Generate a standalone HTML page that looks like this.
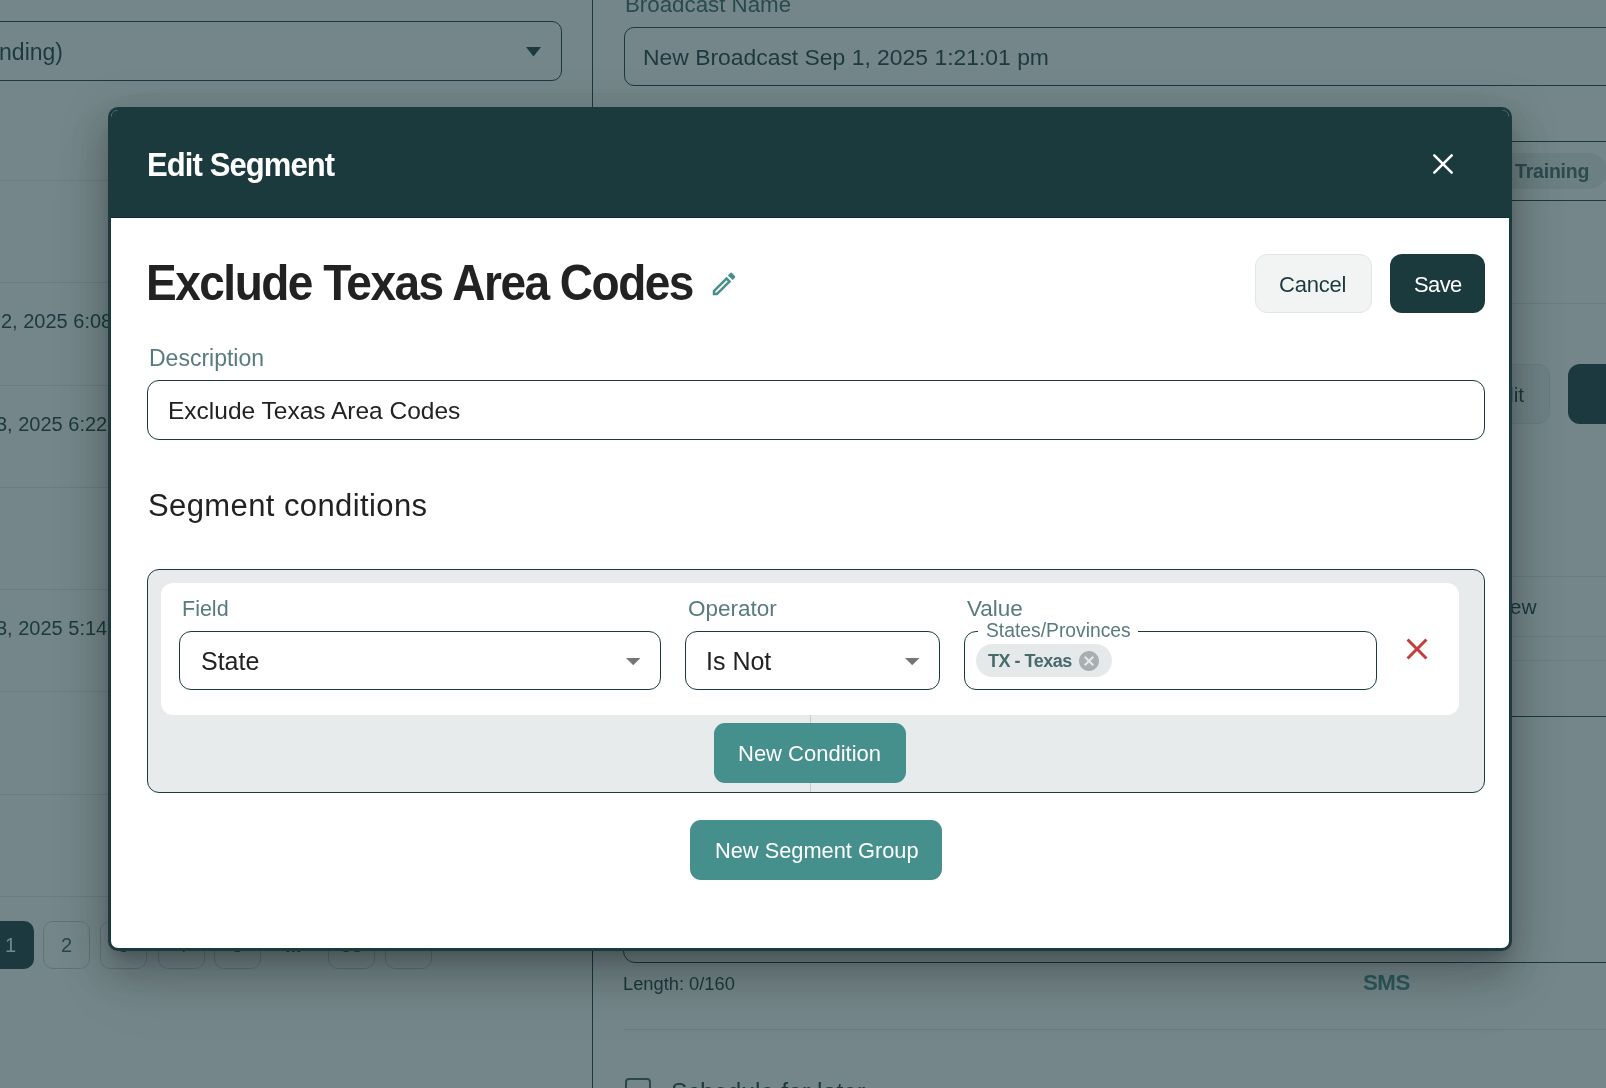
<!DOCTYPE html>
<html><head><meta charset="utf-8"><style>
html,body{margin:0;padding:0;}
body{width:1606px;height:1088px;overflow:hidden;position:relative;background:#fff;font-family:"Liberation Sans",sans-serif;}
.t{position:absolute;white-space:nowrap;line-height:1;will-change:transform;}
.r{position:absolute;}
#ov{position:absolute;left:0;top:0;width:1606px;height:1088px;background:rgba(27,58,62,0.61);}
</style></head><body>
<div class="r" style="left:-300px;top:21px;width:861.5px;height:59.5px;border:1.3px solid #1b3a3e;border-radius:10px;box-sizing:border-box;"></div>
<div class="t" style="left:-79px;top:40.53px;font-size:23px;font-weight:400;color:#1b3a3e;letter-spacing:0px;width:142px;text-align:right;">(Descending)</div>
<svg class="r" style="left:526px;top:46.5px" width="15" height="10"><path d="M0 0 L15 0 L7.5 9.5 Z" fill="#1b3a3e"/></svg>
<div class="r" style="left:592px;top:0px;width:1.2999999999999545px;height:1088px;background:#1b3a3e;"></div>
<div class="r" style="left:0px;top:180px;width:592px;height:1px;background:#e3e7e8;"></div>
<div class="r" style="left:0px;top:282px;width:592px;height:1px;background:#e3e7e8;"></div>
<div class="r" style="left:0px;top:385px;width:592px;height:1px;background:#e3e7e8;"></div>
<div class="r" style="left:0px;top:487px;width:592px;height:1px;background:#e3e7e8;"></div>
<div class="r" style="left:0px;top:589px;width:592px;height:1px;background:#e3e7e8;"></div>
<div class="r" style="left:0px;top:691px;width:592px;height:1px;background:#e3e7e8;"></div>
<div class="r" style="left:0px;top:794px;width:592px;height:1px;background:#e3e7e8;"></div>
<div class="r" style="left:0px;top:896px;width:592px;height:1px;background:#e3e7e8;"></div>
<div class="t" style="left:1px;top:311.07px;font-size:20px;font-weight:400;color:#1b3a3e;letter-spacing:0px;">2, 2025 6:08 PM</div>
<div class="t" style="left:-4.5px;top:414.07px;font-size:20px;font-weight:400;color:#1b3a3e;letter-spacing:0px;">3, 2025 6:22 PM</div>
<div class="t" style="left:-4.5px;top:618.07px;font-size:20px;font-weight:400;color:#1b3a3e;letter-spacing:0px;">3, 2025 5:14:22 PM</div>
<div class="r" style="left:-13px;top:921.2px;width:47px;height:47.59999999999991px;background:#1b3a3e;border-radius:10px;"></div>
<div class="t" style="left:-13px;top:935.07px;font-size:20px;font-weight:400;color:#fff;letter-spacing:0px;width:47px;text-align:center;">1</div>
<div class="r" style="left:43.4px;top:921.2px;width:47.00000000000001px;height:47.59999999999991px;border:1px solid #c9d1d2;border-radius:10px;box-sizing:border-box;"></div>
<div class="t" style="left:43.4px;top:935.07px;font-size:20px;font-weight:400;color:#3b5a5e;letter-spacing:0px;width:47px;text-align:center;">2</div>
<div class="r" style="left:100.3px;top:921.2px;width:47.000000000000014px;height:47.59999999999991px;border:1px solid #c9d1d2;border-radius:10px;box-sizing:border-box;"></div>
<div class="t" style="left:100.3px;top:935.07px;font-size:20px;font-weight:400;color:#3b5a5e;letter-spacing:0px;width:47px;text-align:center;">3</div>
<div class="r" style="left:157.5px;top:921.2px;width:47.0px;height:47.59999999999991px;border:1px solid #c9d1d2;border-radius:10px;box-sizing:border-box;"></div>
<div class="t" style="left:157.5px;top:935.07px;font-size:20px;font-weight:400;color:#3b5a5e;letter-spacing:0px;width:47px;text-align:center;">4</div>
<div class="r" style="left:214.3px;top:921.2px;width:47.0px;height:47.59999999999991px;border:1px solid #c9d1d2;border-radius:10px;box-sizing:border-box;"></div>
<div class="t" style="left:214.3px;top:935.07px;font-size:20px;font-weight:400;color:#3b5a5e;letter-spacing:0px;width:47px;text-align:center;">5</div>
<div class="r" style="left:328.4px;top:921.2px;width:47.0px;height:47.59999999999991px;border:1px solid #c9d1d2;border-radius:10px;box-sizing:border-box;"></div>
<div class="t" style="left:328.4px;top:935.07px;font-size:20px;font-weight:400;color:#3b5a5e;letter-spacing:0px;width:47px;text-align:center;">38</div>
<div class="r" style="left:385.3px;top:921.2px;width:47.0px;height:47.59999999999991px;border:1px solid #c9d1d2;border-radius:10px;box-sizing:border-box;"></div>
<div class="t" style="left:385.3px;top:935.07px;font-size:20px;font-weight:400;color:#3b5a5e;letter-spacing:0px;width:47px;text-align:center;">&gt;</div>
<div class="t" style="left:285px;top:935.07px;font-size:20px;font-weight:700;color:#3b5a5e;letter-spacing:0px;">...</div>
<div class="t" style="left:625px;top:-5.68px;font-size:22.3px;font-weight:400;color:#3b6266;letter-spacing:0px;">Broadcast Name</div>
<div class="r" style="left:623.5px;top:27.2px;width:1076.5px;height:59.099999999999994px;border:1.3px solid #1b3a3e;border-radius:10px;box-sizing:border-box;"></div>
<div class="t" style="left:643px;top:46.42px;font-size:22.9px;font-weight:400;color:#1b3a3e;letter-spacing:0px;">New Broadcast Sep 1, 2025 1:21:01 pm</div>
<div class="r" style="left:593px;top:141px;width:1013px;height:1.1999999999999886px;background:#1b3a3e;"></div>
<div class="r" style="left:593px;top:200px;width:1013px;height:1.1999999999999886px;background:#1b3a3e;"></div>
<div class="r" style="left:1420px;top:152.8px;width:187px;height:36.0px;background:#e9eced;border-radius:18px;"></div>
<div class="t" style="left:1515px;top:162.29px;font-size:19.5px;font-weight:700;color:#46676a;letter-spacing:-0.2px;">Training</div>
<div class="r" style="left:623px;top:303px;width:983px;height:1px;background:#e3e7e8;"></div>
<div class="r" style="left:1440px;top:364.4px;width:110px;height:59.200000000000045px;background:#f2f4f4;border:1px solid #e1e5e6;border-radius:12px;box-sizing:border-box;"></div>
<div class="t" style="left:1488px;top:384.22px;font-size:21px;font-weight:400;color:#1b3a3e;letter-spacing:0px;">Edit</div>
<div class="r" style="left:1568px;top:364.4px;width:132px;height:59.200000000000045px;background:#1b3a3e;border-radius:12px;"></div>
<div class="r" style="left:623px;top:576px;width:983px;height:1px;background:#e3e7e8;"></div>
<div class="t" style="left:1462px;top:596.22px;font-size:21px;font-weight:400;color:#1b3a3e;letter-spacing:0px;">Preview</div>
<div class="r" style="left:623px;top:635.5px;width:983px;height:1.0px;background:#e3e7e8;"></div>
<div class="r" style="left:623px;top:660px;width:983px;height:1px;background:#e3e7e8;"></div>
<div class="r" style="left:623px;top:715.8px;width:1077px;height:247.20000000000005px;border:1.3px solid #1b3a3e;border-radius:12px;box-sizing:border-box;"></div>
<div class="t" style="left:623px;top:975.21px;font-size:18.3px;font-weight:400;color:#1b3a3e;letter-spacing:0px;">Length: 0/160</div>
<div class="t" style="left:1363px;top:971.62px;font-size:22.3px;font-weight:700;color:#458f8c;letter-spacing:-0.5px;">SMS</div>
<div class="r" style="left:623px;top:1029px;width:983px;height:1px;background:#e3e7e8;"></div>
<div class="r" style="left:625px;top:1077.5px;width:26px;height:25.5px;border:2.2px solid #3c6064;border-radius:4px;box-sizing:border-box;"></div>
<div class="t" style="left:671px;top:1079.81px;font-size:24.8px;font-weight:400;color:#1b3a3e;letter-spacing:0px;">Schedule for later</div>
<div id="ov"></div>
<div class="r" style="left:108px;top:107px;width:1404px;height:844px;background:#fff;border:3px solid #1b3a3e;border-radius:10px;box-sizing:border-box;overflow:hidden;box-shadow:0px 11px 15px -7px rgba(0,0,0,0.2),0px 24px 38px 3px rgba(0,0,0,0.14),0px 9px 46px 8px rgba(0,0,0,0.12),0px 36px 70px 0px rgba(0,0,0,0.07);"></div>
<div class="r" style="left:111px;top:110px;width:1398px;height:108px;background:#1b3a3e;border-radius:7px 7px 0 0;"></div>
<div class="r" style="left:111px;top:217px;width:1398px;height:1px;background:#0e2d32;"></div>
<div class="t" style="left:147px;top:149.76px;font-size:31px;font-weight:700;color:#fff;letter-spacing:-0.9px;transform:scaleY(1.08);transform-origin:0 26.2px;">Edit Segment</div>
<svg class="r" style="left:1428px;top:149px" width="30" height="30" viewBox="0 0 30 30"><path d="M6.3 6.3 L23.7 23.7 M23.7 6.3 L6.3 23.7" stroke="#fff" stroke-width="2.6" stroke-linecap="round"/></svg>
<div class="t" style="left:146px;top:261.06px;font-size:46px;font-weight:700;color:#222;letter-spacing:-1.5px;transform:scaleY(1.07);transform-origin:0 38.9px;">Exclude Texas Area Codes</div>
<svg class="r" style="left:709px;top:269px" width="30" height="30" viewBox="0 0 24 24"><path fill="#458f8c" d="M3 17.25V21h3.75L17.81 9.94l-3.75-3.75L3 17.25zM5.92 19H5v-.92l9.06-9.06.92.92L5.92 19zM20.71 5.63l-2.34-2.34c-.2-.2-.45-.29-.71-.29s-.51.1-.7.29l-1.83 1.83 3.75 3.75 1.83-1.83c.39-.39.39-1.02 0-1.41z"/></svg>
<div class="r" style="left:1254.7px;top:254px;width:117.0px;height:59.19999999999999px;background:#f2f4f4;border:1px solid #e1e5e6;border-radius:12px;box-sizing:border-box;"></div>
<div class="t" style="left:1279px;top:273.68px;font-size:22px;font-weight:400;color:#1b3a3e;letter-spacing:-0.2px;">Cancel</div>
<div class="r" style="left:1390px;top:254px;width:95px;height:59.19999999999999px;background:#1b3a3e;border-radius:12px;"></div>
<div class="t" style="left:1413.5px;top:273.68px;font-size:22px;font-weight:400;color:#fff;letter-spacing:-0.6px;">Save</div>
<div class="t" style="left:149px;top:346.53px;font-size:23px;font-weight:400;color:#587b7e;letter-spacing:0px;">Description</div>
<div class="r" style="left:147px;top:380px;width:1338px;height:60px;border:1.4px solid #1b3a3e;border-radius:12px;box-sizing:border-box;"></div>
<div class="t" style="left:168px;top:399.06px;font-size:24.5px;font-weight:400;color:#222;letter-spacing:0px;">Exclude Texas Area Codes</div>
<div class="t" style="left:148px;top:489.76px;font-size:31px;font-weight:400;color:#222;letter-spacing:0.4px;">Segment conditions</div>
<div class="r" style="left:147px;top:569.4px;width:1338px;height:223.20000000000005px;background:#e7ebec;border:1.4px solid #1b3a3e;border-radius:12px;box-sizing:border-box;"></div>
<div class="r" style="left:810px;top:715px;width:1px;height:77px;background:#c5cdce;"></div>
<div class="r" style="left:161px;top:582.6px;width:1298px;height:132.39999999999998px;background:#fff;border-radius:12px;"></div>
<div class="t" style="left:182px;top:598.80px;font-size:21.5px;font-weight:400;color:#587b7e;letter-spacing:0px;">Field</div>
<div class="r" style="left:179px;top:631.4px;width:481.6px;height:59.0px;border:1.4px solid #1b3a3e;border-radius:12px;box-sizing:border-box;"></div>
<div class="t" style="left:201px;top:649.34px;font-size:25px;font-weight:400;color:#222;letter-spacing:0px;">State</div>
<svg class="r" style="left:625.5px;top:658px" width="14.4" height="7.2"><path d="M0 0 L14.4 0 L7.2 7.2 Z" fill="#757575"/></svg>
<div class="t" style="left:687.6px;top:597.95px;font-size:22.5px;font-weight:400;color:#587b7e;letter-spacing:0px;">Operator</div>
<div class="r" style="left:685px;top:631.4px;width:255px;height:59.0px;border:1.4px solid #1b3a3e;border-radius:12px;box-sizing:border-box;"></div>
<div class="t" style="left:706.4px;top:648.84px;font-size:25px;font-weight:400;color:#222;letter-spacing:0px;">Is Not</div>
<svg class="r" style="left:904.5px;top:658px" width="14.4" height="7.2"><path d="M0 0 L14.4 0 L7.2 7.2 Z" fill="#757575"/></svg>
<div class="t" style="left:966.7px;top:597.95px;font-size:22.5px;font-weight:400;color:#587b7e;letter-spacing:0px;">Value</div>
<div class="r" style="left:964.3px;top:631.4px;width:412.4000000000001px;height:59.0px;border:1.4px solid #1b3a3e;border-radius:12px;box-sizing:border-box;"></div>
<div class="r" style="left:978px;top:628px;width:159.5px;height:6px;background:#fff;"></div>
<div class="t" style="left:985.5px;top:620.86px;font-size:19.3px;font-weight:400;color:#587b7e;letter-spacing:0px;">States/Provinces</div>
<div class="r" style="left:976px;top:644px;width:136px;height:33px;background:#e5e9ea;border-radius:17px;"></div>
<div class="t" style="left:988px;top:652.26px;font-size:18px;font-weight:700;color:#496a6d;letter-spacing:-0.5px;">TX - Texas</div>
<svg class="r" style="left:1077px;top:649px" width="24" height="24" viewBox="0 0 24 24"><path fill="#a9afb0" d="M12 2C6.47 2 2 6.47 2 12s4.47 10 10 10 10-4.47 10-10S17.53 2 12 2zm5 13.59L15.59 17 12 13.41 8.41 17 7 15.59 10.59 12 7 8.41 8.41 7 12 10.59 15.59 7 17 8.41 13.41 12 17 15.59z"/></svg>
<svg class="r" style="left:1399px;top:631px" width="36" height="36" viewBox="0 0 24 24"><path fill="#c63c36" d="M19 6.41L17.59 5 12 10.59 6.41 5 5 6.41 10.59 12 5 17.59 6.41 19 12 13.41 17.59 19 19 17.59 13.41 12z"/></svg>
<div class="r" style="left:714px;top:723px;width:192px;height:60px;background:#458f8c;border-radius:11px;"></div>
<div class="t" style="left:738px;top:743.08px;font-size:22px;font-weight:400;color:#fff;letter-spacing:0px;">New Condition</div>
<div class="r" style="left:690px;top:820px;width:252px;height:60px;background:#458f8c;border-radius:11px;"></div>
<div class="t" style="left:715px;top:840.25px;font-size:21.8px;font-weight:400;color:#fff;letter-spacing:0px;">New Segment Group</div>
</body></html>
